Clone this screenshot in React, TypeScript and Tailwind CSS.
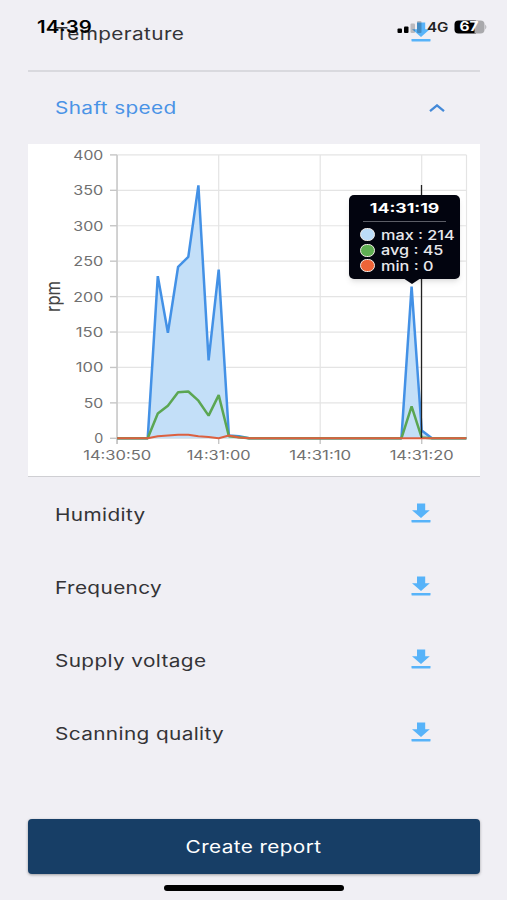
import clsx from "clsx";

const rows = ["Humidity", "Frequency", "Supply voltage", "Scanning quality"];

// [seconds since 14:30:50, rpm]
const maxSeries = [
  [0, 0], [3, 0], [4, 229], [5, 149], [6, 242], [7, 256], [8, 357], [9, 110], [10, 238],
  [11, 4], [12, 3], [13, 0], [28, 0], [29, 214], [30, 11], [31, 0], [34.4, 0],
];
const avgSeries = [
  [0, 0], [3, 0], [4, 35], [5, 46], [6, 65], [7, 66], [8, 53], [9, 32], [10, 61],
  [11, 3], [13, 0], [28, 0], [29, 45], [30, 1], [31, 0], [34.4, 0],
];
const minSeries = [
  [0, 0], [3, 0], [4, 3], [5, 4], [6, 5], [7, 5], [8, 3], [9, 2], [10, 0],
  [11, 4], [12, 1], [13, 0], [34.4, 0],
];

const yTicks = [0, 50, 100, 150, 200, 250, 300, 350, 400];
const xTicks = [
  { sec: 0, label: "14:30:50", width: 68 },
  { sec: 10, label: "14:31:00", width: 64 },
  { sec: 20, label: "14:31:10", width: 62 },
  { sec: 30, label: "14:31:20", width: 64 },
];

const px = (sec: number) => 89.2 + sec * 10.15;
const py = (rpm: number) => 294.3 - rpm * 0.7085;
const points = (series: number[][]) =>
  series.map(([s, v]) => `${px(s).toFixed(1)},${py(v).toFixed(1)}`).join(" ");

function DownloadIcon() {
  return (
    <svg viewBox="0 0 20 20" className="mb-[3px] h-5 w-5 text-[#57b3f9]" fill="currentColor">
      <path d="M6 0.4h8.2v6.8h4.6L10 15 1 7.200h5z" />
      <rect x="0.5" y="17" width="19" height="2.4" rx="0.4" />
    </svg>
  );
}

function Label({ text, className = "origin-left" }: { text: string; className?: string }) {
  return (
    <span
      className={clsx(
        "inline-block scale-x-[1.223] whitespace-nowrap text-[17px] leading-6 tracking-[0.3px]",
        className,
      )}
    >
      {text}
    </span>
  );
}

function Row({ text }: { text: string }) {
  return (
    <div className="flex h-[73px] items-center justify-between pr-[49px] pl-[27px]">
      <Label text={text} />
      <DownloadIcon />
    </div>
  );
}

function Chart() {
  return (
    <svg viewBox="0 0 452 332" className="block h-[332px] w-[452px]" fontFamily="Inter, sans-serif">
      <g stroke="#e4e4e4" strokeWidth="1.2">
        {yTicks.map((v) => (
          <line key={v} x1="89" x2="438.5" y1={py(v)} y2={py(v)} />
        ))}
        {xTicks.map((t) => (
          <line key={t.sec} x1={px(t.sec)} x2={px(t.sec)} y1="11" y2="294" />
        ))}
        <line x1="438.5" x2="438.5" y1="11" y2="294" />
      </g>
      <g stroke="#c6c6c6" strokeWidth="1.4">
        <line x1="89" x2="89" y1="11" y2="300" />
        {yTicks.map((v) => (
          <line key={v} x1="82" x2="89" y1={py(v)} y2={py(v)} />
        ))}
        {xTicks.map((t) => (
          <line key={t.sec} x1={px(t.sec)} x2={px(t.sec)} y1="294" y2="300" />
        ))}
      </g>
      <g fill="#707070" fontSize="12.5">
        {yTicks.map((v) => {
          const w = v === 0 ? 9 : v === 50 ? 19.5 : v < 200 ? 27.5 : 30;
          return (
            <text key={v} x={75.3 - w} y={py(v) + 4.9} textLength={w} lengthAdjust="spacingAndGlyphs">
              {v}
            </text>
          );
        })}
        {xTicks.map((t) => (
          <text
            key={t.sec}
            x={px(t.sec) - t.width / 2}
            y="316"
            textLength={t.width}
            lengthAdjust="spacingAndGlyphs"
          >
            {t.label}
          </text>
        ))}
      </g>
      <text
        transform="translate(32 168) rotate(-90)"
        fill="#444"
        fontSize="19"
        textLength="31"
        lengthAdjust="spacingAndGlyphs"
      >
        rpm
      </text>
      <polygon points={points(maxSeries)} fill="#c3dff8" />
      <g fill="none" strokeWidth="2.5" strokeLinejoin="bevel">
        <polyline points={points(maxSeries)} stroke="#4391e6" />
        <polyline points={points(avgSeries)} stroke="#5ba653" />
        <polyline points={points(minSeries)} stroke="#dc6040" strokeWidth="2" />
      </g>
      <line x1="393.5" x2="393.5" y1="41" y2="294" stroke="#222" strokeWidth="1.3" />
    </svg>
  );
}

const legend = [
  { name: "max : 214", dot: "bg-[#bbdcf8]" },
  { name: "avg : 45", dot: "bg-[#5fae52]" },
  { name: "min : 0", dot: "bg-[#ee6438]" },
];

function Tooltip() {
  return (
    <div className="absolute top-[51px] left-[321px] h-[84px] w-[111px] rounded-[5px] bg-[#02040f] text-[#e8e8ec] shadow-md">
      <div className="mx-[14px] flex h-[27px] items-center justify-center border-b border-[#5b5d66] pt-[2px] text-[13px] font-bold text-white">
        <span className="inline-block scale-x-[1.36] whitespace-nowrap">14:31:19</span>
      </div>
      <div className="mt-[5px] ml-[11px]">
        {legend.map((item) => (
          <div key={item.name} className="flex h-[15.6px] items-center gap-[6px]">
            <span className={clsx("h-[13px] w-[15px] rounded-full border border-[#f3ece6]", item.dot)} />
            <span className="mt-px inline-block origin-left scale-x-[1.25] text-[13px] font-medium whitespace-nowrap">
              {item.name}
            </span>
          </div>
        ))}
      </div>
      <svg viewBox="0 0 18 6" className="absolute top-[83px] left-[54px] h-[6px] w-[18px]">
        <path d="M0 0h18L9 6z" fill="#02040f" />
      </svg>
    </div>
  );
}

function StatusBar() {
  return (
    <div className="absolute inset-x-0 top-0 flex h-[54px] items-center justify-between pr-[20px] pl-[37px] text-black">
      <span className="mt-px inline-block origin-left scale-x-[1.2] text-[17px] font-semibold">14:39</span>
      <svg viewBox="0 0 92 16" className="mt-px h-4 w-[92px]" fontFamily="Inter, sans-serif">
        <rect x="2.5" y="8.5" width="4.5" height="4.5" rx="1" />
        <rect x="9" y="6.5" width="4.5" height="6.5" rx="1" />
        <rect x="15.5" y="3.5" width="4.5" height="9.5" rx="1" opacity=".22" />
        <rect x="22" y="1" width="4.5" height="12" rx="1" opacity=".22" />
        <text x="32" y="12.3" fontSize="13" fontWeight="600" fill="#222" textLength="21.5" lengthAdjust="spacingAndGlyphs">
          4G
        </text>
        <path d="M63.5 0.5H81v13H63.5a4 4 0 0 1-4-4v-5a4 4 0 0 1 4-4z" />
        <path d="M79.5 0.5H85.500a4 4 0 0 1 4 4v5a4 4 0 0 1-4 4H79.500z" fill="#a9a9ac" />
        <path d="M90.3 4.5q2 2.500 0 5z" fill="#a9a9ac" />
        <text x="64.5" y="11.4" fontSize="12.500" fontWeight="700" fill="#fff" textLength="19" lengthAdjust="spacingAndGlyphs">
          67
        </text>
      </svg>
    </div>
  );
}

export default function App() {
  return (
    <div className="relative h-[900px] w-[507px] overflow-hidden bg-[#f0eff4] font-['Inter',sans-serif] text-[#343437]">
      <div className="-mt-[3px] ml-[28px] w-[452px]">
        <Row text="Temperature" />
        <div className="h-[2px] bg-[#d9d9de]" />
        <div className="flex h-[72px] items-center justify-between pr-[35px] pl-[27px]">
          <Label text="Shaft speed" className="origin-left text-[#4a93e6]" />
          <svg viewBox="0 0 16 9" className="h-[9px] w-4" fill="none" stroke="#4389d8" strokeWidth="2.3">
            <path d="M1 7.2L8 1.4L15 7.2" />
          </svg>
        </div>
        <div className="relative border-b border-[#cfcfd3] bg-white">
          <Chart />
          <Tooltip />
        </div>
        <div className="pt-px">
          {rows.map((text) => (
            <Row key={text} text={text} />
          ))}
        </div>
        <button className="mt-[49px] flex h-[55px] w-full items-center justify-center rounded-[4px] bg-[#173e66] text-white shadow-[0_1px_3px_rgba(0,0,0,0.35)]">
          <Label text="Create report" className="origin-center" />
        </button>
      </div>
      <div className="mt-[11px] ml-[164px] h-[6px] w-[180px] rounded-full bg-black" />
      <StatusBar />
    </div>
  );
}
